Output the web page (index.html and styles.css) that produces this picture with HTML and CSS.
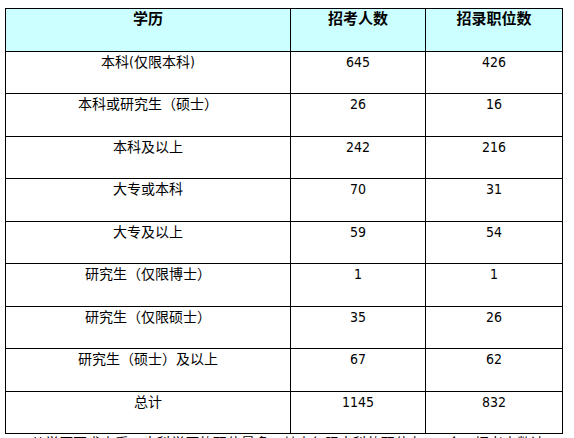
FILE: index.html
```html
<!DOCTYPE html>
<html lang="zh-CN">
<head>
<meta charset="utf-8">
<title>学历分布</title>
<link rel="stylesheet" href="styles.css">
</head>
<body>
<div class="grid">
  <div class="cell head">学历</div>
  <div class="cell head">招考人数</div>
  <div class="cell head">招录职位数</div>

  <div class="cell r42">本科(仅限本科)</div>
  <div class="cell r42">645</div>
  <div class="cell r42">426</div>

  <div class="cell r43">本科或研究生（硕士）</div>
  <div class="cell r43">26</div>
  <div class="cell r43">16</div>

  <div class="cell r42">本科及以上</div>
  <div class="cell r42">242</div>
  <div class="cell r42">216</div>

  <div class="cell r43">大专或本科</div>
  <div class="cell r43">70</div>
  <div class="cell r43">31</div>

  <div class="cell r42">大专及以上</div>
  <div class="cell r42">59</div>
  <div class="cell r42">54</div>

  <div class="cell r43">研究生（仅限博士）</div>
  <div class="cell r43">1</div>
  <div class="cell r43">1</div>

  <div class="cell r42">研究生（仅限硕士）</div>
  <div class="cell r42">35</div>
  <div class="cell r42">26</div>

  <div class="cell r43">研究生（硕士）及以上</div>
  <div class="cell r43">67</div>
  <div class="cell r43">62</div>

  <div class="cell r42">总计</div>
  <div class="cell r42">1145</div>
  <div class="cell r42">832</div>
</div>
<p class="note">从学历要求来看，本科学历的职位最多，其中仅限本科的职位有426个，招考人数达645人。</p>
</body>
</html>
```

FILE: styles.css
```css
html, body {
  margin: 0;
  padding: 0;
  background: #ffffff;
}
body {
  padding: 8px 0 0 5px;
  font-family: "DejaVu Sans Condensed", "DejaVu Sans", "Noto Sans CJK SC", sans-serif;
  font-size: 14px;
  color: #000000;
  overflow: hidden;
  height: 438px;
  box-sizing: border-box;
}
.grid {
  display: grid;
  grid-template-columns: 285px 135px 137px;
  width: 558px;
  box-sizing: border-box;
  border-top: 1px solid #000;
  border-left: 1px solid #000;
}
.cell {
  box-sizing: border-box;
  border-right: 1px solid #000;
  border-bottom: 1px solid #000;
  text-align: center;
  line-height: 18px;
  padding-top: 1px;
}
.head {
  height: 43px;
  background: #ccffff;
  font-weight: bold;
  font-size: 15px;
  padding-top: 1px;
}
.r42 { height: 42px; }
.r43 { height: 43px; }
.note {
  margin: 0;
  padding-left: 26px;
  width: 558px;
  box-sizing: border-box;
  overflow: hidden;
  line-height: 18px;
  font-size: 14px;
  white-space: nowrap;
}
```
